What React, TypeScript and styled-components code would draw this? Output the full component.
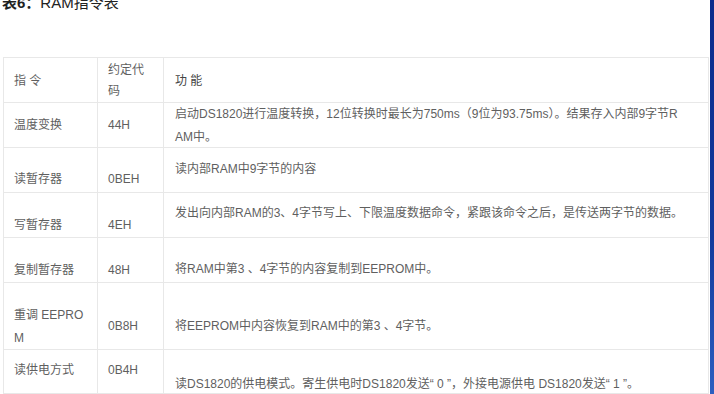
import React from 'react';
import styled, { createGlobalStyle } from 'styled-components';

const GlobalStyle = createGlobalStyle`
	html, body {
		margin: 0;
		padding: 0;
		background: #fff;
	}
	body {
		font-family: 'Liberation Sans', 'Noto Sans CJK SC', sans-serif;
	}
`;

type Row = {
	cmd: string[];
	code: string;
	func: string[];
	height: number;
	pads: [number, number, number];
};

const rows: Row[] = [
	{
		cmd: ['温度变换'],
		code: '44H',
		func: ['启动DS1820进行温度转换，12位转换时最长为750ms（9位为93.75ms）。结果存入内部9字节R', 'AM中。'],
		height: 45,
		pads: [10.5, 10.5, 0],
	},
	{ cmd: ['读暂存器'], code: '0BEH', func: ['读内部RAM中9字节的内容'], height: 45, pads: [19.5, 19.5, 9.5] },
	{
		cmd: ['写暂存器'],
		code: '4EH',
		func: ['发出向内部RAM的3、4字节写上、下限温度数据命令，紧跟该命令之后，是传送两字节的数据。'],
		height: 45,
		pads: [21, 21, 9],
	},
	{ cmd: ['复制暂存器'], code: '48H', func: ['将RAM中第3 、4字节的内容复制到EEPROM中。'], height: 45, pads: [20.5, 20.5, 19.5] },
	{ cmd: ['重调 EEPRO', 'M'], code: '0B8H', func: ['将EEPROM中内容恢复到RAM中的第3 、4字节。'], height: 67, pads: [20.5, 32, 32] },
	{
		cmd: ['读供电方式'],
		code: '0B4H',
		func: ['读DS1820的供电模式。寄生供电时DS1820发送“ 0 ”，外接电源供电 DS1820发送“ 1 ”。'],
		height: 44,
		pads: [8.5, 8.5, 22.5],
	},
];

function Lines({ lines }: { lines: string[] }) {
	return (
		<>
			{lines.map((line, i) => (
				<React.Fragment key={i}>
					{i > 0 && <br />}
					{line}
				</React.Fragment>
			))}
		</>
	);
}

export default function App() {
	return (
		<Page>
			<GlobalStyle />
			<Content>
				<Title>
					<b>表6：</b>RAM指令表
				</Title>
				<Table>
					<TableRow $height={45} $lineHeight={21}>
						<Cell $pt={13}>指 令</Cell>
						<Cell $pt={1.5}>
							约定代
							<br />码
						</Cell>
						<Cell $pt={13} $last>
							<HeadText>功 能</HeadText>
						</Cell>
					</TableRow>
					{rows.map(row => (
						<TableRow key={row.code} $height={row.height} $lineHeight={23}>
							<Cell $pt={row.pads[0]}>
								<Lines lines={row.cmd} />
							</Cell>
							<Cell $pt={row.pads[1]}>{row.code}</Cell>
							<Cell $pt={row.pads[2]} $last>
								<Lines lines={row.func} />
							</Cell>
						</TableRow>
					))}
				</Table>
			</Content>
			<Edge />
		</Page>
	);
}

const Page = styled.div`
	display: flex;
	width: 714px;
	height: 394px;
	overflow: hidden;
	background: #fff;
`;

const Content = styled.div`
	flex: 1;
	min-width: 0;
	display: flex;
	flex-direction: column;
`;

const Title = styled.div`
	margin: -6px 0 0 2px;
	height: 18px;
	line-height: 18px;
	font-size: 15px;
	color: #222;
	white-space: nowrap;

	b {
		font-weight: bold;
	}
`;

const Table = styled.div`
	margin: 45px 0 0 3px;
	width: 706px;
	box-sizing: border-box;
	border: 1px solid #e8e8e8;
	border-bottom: none;
	font-size: 12px;
	color: #5f5f5f;
`;

const TableRow = styled.div<{ $height: number; $lineHeight: number }>`
	display: grid;
	grid-template-columns: 94px 66px 1fr;
	height: ${p => p.$height}px;
	box-sizing: border-box;
	border-bottom: 1px solid #e8e8e8;
	line-height: ${p => p.$lineHeight}px;
`;

const Cell = styled.div<{ $pt: number; $last?: boolean }>`
	box-sizing: border-box;
	padding: ${p => p.$pt}px 0 0 ${p => (p.$last ? 11 : 10)}px;
	border-right: ${p => (p.$last ? 'none' : '1px solid #e8e8e8')};
	white-space: nowrap;
	overflow: hidden;
`;

const HeadText = styled.span`
	color: #444;
`;

const Edge = styled.div`
	width: 4px;
	flex-shrink: 0;
	background: linear-gradient(#0b2b8c, #123a9c 60%, #2c5fc0);
`;
